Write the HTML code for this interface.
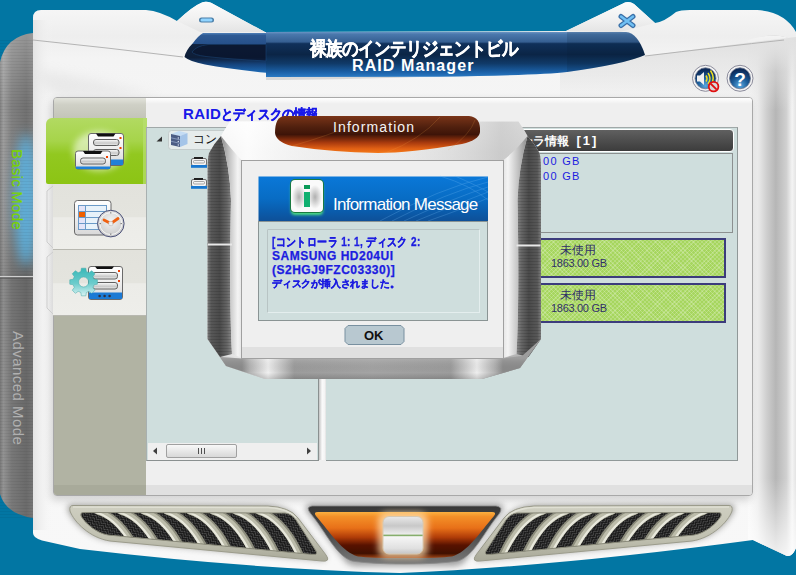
<!DOCTYPE html>
<html><head><meta charset="utf-8">
<style>
html,body{margin:0;padding:0;width:796px;height:575px;overflow:hidden;background:#0276a3;font-family:"Liberation Sans",sans-serif;}
.a{position:absolute;}
#chrome{position:absolute;left:0;top:0;}
</style></head><body>
<svg id="chrome" width="796" height="575" viewBox="0 0 796 575">
<defs>
  <linearGradient id="sideg" x1="0" x2="1" y1="0" y2="0">
    <stop offset="0" stop-color="#808080"/><stop offset="0.1" stop-color="#9c9c9c"/><stop offset="0.35" stop-color="#808080"/><stop offset="0.8" stop-color="#717171"/><stop offset="1" stop-color="#7c7c7c"/>
  </linearGradient>
  <linearGradient id="sidev" x1="0" x2="0" y1="0" y2="1">
    <stop offset="0" stop-color="#ffffff" stop-opacity="0.25"/><stop offset="0.15" stop-color="#ffffff" stop-opacity="0"/><stop offset="0.5" stop-color="#000" stop-opacity="0.1"/><stop offset="1" stop-color="#000" stop-opacity="0.05"/>
  </linearGradient>
  <radialGradient id="sideglow" cx="0.8" cy="0.5" r="0.5" gradientTransform="translate(0.1,0) scale(0.9,1)">
    <stop offset="0" stop-color="#60c0f0" stop-opacity="0.9"/><stop offset="0.6" stop-color="#4a90c8" stop-opacity="0.45"/><stop offset="1" stop-color="#4a80b0" stop-opacity="0"/>
  </radialGradient>
  <linearGradient id="bodyg" x1="0" x2="0" y1="0" y2="1">
    <stop offset="0" stop-color="#f8f8f8"/><stop offset="0.06" stop-color="#eeeeee"/><stop offset="0.1" stop-color="#f4f4f4"/><stop offset="0.3" stop-color="#f6f6f6"/><stop offset="1" stop-color="#f8f8f8"/>
  </linearGradient>
  <linearGradient id="leftg" x1="0" x2="1" y1="0" y2="0">
    <stop offset="0" stop-color="#e4e4e4"/><stop offset="1" stop-color="#f6f6f6" stop-opacity="0"/>
  </linearGradient>
  <linearGradient id="rightg" x1="0" x2="1" y1="0" y2="0">
    <stop offset="0" stop-color="#f0f0f0" stop-opacity="0"/><stop offset="0.2" stop-color="#ececec"/><stop offset="0.4" stop-color="#cdcdcd"/><stop offset="0.58" stop-color="#b6b6b6"/><stop offset="0.8" stop-color="#d0d0d0"/><stop offset="0.92" stop-color="#f4f4f4"/><stop offset="1" stop-color="#e4e4e4"/>
  </linearGradient>
  <linearGradient id="rightv" x1="0" x2="0" y1="0" y2="1">
    <stop offset="0" stop-color="#f4f4f4" stop-opacity="1"/><stop offset="0.02" stop-color="#f0f0f0" stop-opacity="0.9"/><stop offset="0.07" stop-color="#f0f0f0" stop-opacity="0"/><stop offset="0.85" stop-color="#fff" stop-opacity="0"/><stop offset="1" stop-color="#fff" stop-opacity="0.8"/>
  </linearGradient>
  <linearGradient id="bannerg" x1="0" x2="0" y1="0" y2="1">
    <stop offset="0" stop-color="#6a94c4"/><stop offset="0.05" stop-color="#4a78ac"/><stop offset="0.22" stop-color="#365f92"/><stop offset="0.26" stop-color="#10305a"/><stop offset="0.5" stop-color="#0b2546"/><stop offset="0.7" stop-color="#103a68"/><stop offset="0.88" stop-color="#1a5ea4"/><stop offset="1" stop-color="#2a7ac4"/>
  </linearGradient>
  <linearGradient id="bannerl" x1="0" x2="0" y1="0" y2="1">
    <stop offset="0" stop-color="#5080b8"/><stop offset="0.06" stop-color="#2e5a94"/><stop offset="0.27" stop-color="#26508a"/><stop offset="0.29" stop-color="#10223e"/><stop offset="0.62" stop-color="#0e1e38"/><stop offset="0.78" stop-color="#15427a"/><stop offset="1" stop-color="#1e6cb8"/>
  </linearGradient>
  <linearGradient id="bumpg" x1="0" x2="0" y1="0" y2="1">
    <stop offset="0" stop-color="#fcfcfc"/><stop offset="0.6" stop-color="#f0f0f0"/><stop offset="1" stop-color="#e4e4e4"/>
  </linearGradient>
  <pattern id="brushs" width="33" height="3" patternUnits="userSpaceOnUse"><rect y="1" width="33" height="1" fill="#000" opacity="0.05"/></pattern>
  <linearGradient id="crg" x1="0" x2="0" y1="40" y2="110" gradientUnits="userSpaceOnUse"><stop offset="0" stop-color="#dadada" stop-opacity="0.7"/><stop offset="0.5" stop-color="#e0e0e0" stop-opacity="0.5"/><stop offset="1" stop-color="#e8e8e8" stop-opacity="0"/></linearGradient>
  <filter id="bl6" x="-50%" y="-50%" width="200%" height="200%"><feGaussianBlur stdDeviation="6"/></filter>
</defs>
<!-- side bar -->
<path d="M0,62 Q6,36 33,33 L33,518 Q6,514 0,494 Z" fill="url(#sideg)"/>
<path d="M0,62 Q6,36 33,33 L33,518 Q6,514 0,494 Z" fill="url(#sidev)"/>
<ellipse cx="26" cy="200" rx="12" ry="66" fill="#5cbcf0" opacity="0.8" filter="url(#bl6)"/>
<rect x="0" y="40" width="33" height="480" fill="url(#brushs)"/>
<rect x="0" y="276" width="33" height="1.5" fill="#d0d0d0"/>
<rect x="0" y="277.5" width="33" height="1" fill="#4a4a4a"/>
<!-- body -->
<path d="M33,18 Q33,10 41,10 L146,10 Q160,11 177,21 Q193,6 202,2.5 Q206,0.8 211,2.8 L265,32 L566,31 L622,4 Q628,0 634,4 L655,23 Q664,22 676,12 Q680,10 690,10 L757,10 Q785,12 796,32 L796,548 Q792,557 787,556 L753,540 Q560,566 400,573 Q250,569 80,549 L42,540.5 Q33,538 33,533 Z" fill="url(#bodyg)"/>
<path d="M33,20 L53,20 L53,530 L33,530 Z" fill="url(#leftg)"/>
<!-- soft shading near top-left -->
<path d="M40,70 Q100,80 160,97 L60,97 Q45,90 40,80 Z" fill="#d4d4d4" opacity="0.35" filter="url(#bl6)"/>
<!-- right cylinder shading -->
<path d="M748,40 Q780,30 796,42 L796,548 Q792,557 787,556 L753,540 L748,540 Z" fill="url(#rightg)"/>
<path d="M748,40 Q780,30 796,42 L796,548 Q792,557 787,556 L753,540 L748,540 Z" fill="url(#rightv)"/>
<path d="M645,56 Q720,46 796,37 L796,110 L560,110 L560,70 Z" fill="url(#crg)"/>
<!-- creases -->
<path d="M33,40 Q110,48 183,57" stroke="#b4b4b4" stroke-width="1" fill="none"/>
<path d="M645,56 Q720,47 784,40" stroke="#b4b4b4" stroke-width="1" fill="none"/>
<!-- bumps -->
<path d="M177,21 Q193,6 202,2.5 Q206,0.8 211,2.8 L265,32 L200,32 Z" fill="url(#bumpg)"/>
<path d="M566,31 L622,4 Q628,0 634,4 L655,23 L620,32 Z" fill="url(#bumpg)"/>
<!-- minimize icon -->
<rect x="199" y="17.5" width="15" height="5" rx="2.5" fill="#4a7ea8"/>
<rect x="200.5" y="18.5" width="12" height="3" rx="1.5" fill="#90d4ff"/>
<!-- close icon -->
<path d="M621,16.5 L633,25.5 M633,16.5 L621,25.5" stroke="#3a70a8" stroke-width="5" stroke-linecap="round"/>
<path d="M621,16.5 L633,25.5 M633,16.5 L621,25.5" stroke="#70c0f4" stroke-width="2.4" stroke-linecap="round"/>
<!-- banner right (rect) -->
<path d="M266,74 L266,80 Q330,80 420,77 Z" fill="#d8d8d8"/>
<path d="M266,32 L626,32 Q638,33 645,55 Q625,64 567,72 Q540,75.3 440,76.8 L266,77 Z" fill="url(#bannerg)"/>
<path d="M567,32 L626,32 Q638,33 645,55 Q625,64 567,72 Z" fill="#08182e" opacity="0.15"/>
<!-- banner left (tip) -->
<path d="M266,33 L266,72.8 Q230,69 205,64.5 Q189,61 184.5,57 Q186,50 193,43 Q198,36 203,33 Z" fill="url(#bannerl)"/>
<path d="M192,52 Q196,46 208,44.5 L266,44.5 L266,61 Q228,59 206,56.5 Q194,55 192,52 Z" fill="#08122a" opacity="0.55" stroke="#1c4c84" stroke-width="0.8"/>
</svg>


<!-- bottom grilles & button -->
<svg class="a" style="left:0;top:0" width="796" height="575" viewBox="0 0 796 575">
<defs>
  <pattern id="mesh" width="6" height="6" patternUnits="userSpaceOnUse" patternTransform="rotate(40)">
    <rect width="6" height="6" fill="#1a1a1a"/>
    <path d="M0,3 L3,0 L6,3 M0,6 L3,3 L6,6" stroke="#505050" stroke-width="1" fill="none"/>
  </pattern>
  <clipPath id="gin"><path d="M83,512.5 L285,513 Q292,514 296,520 L316,551 Q318,555 313,554.5 L108,535 C96,533 85,523 81,516 Q80,512.5 83,512.5 Z"/></clipPath>
  <linearGradient id="rimg" x1="0" x2="0" y1="0" y2="1"><stop offset="0" stop-color="#cfcfc1"/><stop offset="0.6" stop-color="#c0c0b0"/><stop offset="1" stop-color="#a8a898"/></linearGradient>
  <filter id="blur3" x="-20%" y="-50%" width="140%" height="200%"><feGaussianBlur stdDeviation="3"/></filter>
  <linearGradient id="orb" x1="0" x2="0" y1="0" y2="1">
    <stop offset="0" stop-color="#fbb040"/><stop offset="0.1" stop-color="#f49028"/><stop offset="0.35" stop-color="#e87018"/><stop offset="0.55" stop-color="#b03c08"/><stop offset="0.72" stop-color="#581200"/><stop offset="0.9" stop-color="#401000"/><stop offset="1" stop-color="#a04414"/>
  </linearGradient>
  <linearGradient id="bez" x1="0" x2="0" y1="0" y2="1">
    <stop offset="0" stop-color="#383838"/><stop offset="0.5" stop-color="#4a4a4a"/><stop offset="1" stop-color="#7a7a7a"/>
  </linearGradient>
  <linearGradient id="silv" x1="0" x2="0" y1="0" y2="1">
    <stop offset="0" stop-color="#e8e8e8"/><stop offset="0.25" stop-color="#c8c8c8"/><stop offset="0.47" stop-color="#ececec"/><stop offset="0.5" stop-color="#70a050"/><stop offset="0.54" stop-color="#f6f6f6"/><stop offset="0.85" stop-color="#e0e0e0"/><stop offset="1" stop-color="#c4c4c4"/>
  </linearGradient>
  <g id="grille">
    <path d="M73,505.5 L268,506 Q290,507 298,518 L326,555 Q331,562 322,561 L110,541 C90,538 74,522 70,511 Q69,505.5 73,505.5 Z" fill="#60605a" filter="url(#blur3)" opacity="0.6" transform="translate(-2,-1)"/>
    <path d="M73,505.5 L268,506 Q290,507 298,518 L326,555 Q331,562 322,561 L110,541 C90,538 74,522 70,511 Q69,505.5 73,505.5 Z" fill="url(#rimg)" stroke="#9c9c8c" stroke-width="1"/>
    <path d="M73,507 L268,507.5 Q288,508.5 296,518" stroke="#e0e0d4" stroke-width="1.5" fill="none"/>
    <g clip-path="url(#gin)">
      <rect x="60" y="500" width="270" height="70" fill="url(#mesh)"/>
      <g stroke="#8c8c7c" stroke-width="7" fill="none"><path d="M97.5,511 Q123.5,518 141.5,560"/><path d="M120.5,511 Q146.5,518 164.5,560"/><path d="M143.5,511 Q169.5,518 187.5,560"/><path d="M166.5,511 Q192.5,518 210.5,560"/><path d="M189.5,511 Q215.5,518 233.5,560"/><path d="M212.5,511 Q238.5,518 256.5,560"/><path d="M235.5,511 Q261.5,518 279.5,560"/><path d="M258.5,511 Q284.5,518 302.5,560"/></g><g stroke="#bcbcaa" stroke-width="5.5" fill="none"><path d="M96,511 Q122,518 140,560"/><path d="M119,511 Q145,518 163,560"/><path d="M142,511 Q168,518 186,560"/><path d="M165,511 Q191,518 209,560"/><path d="M188,511 Q214,518 232,560"/><path d="M211,511 Q237,518 255,560"/><path d="M234,511 Q260,518 278,560"/><path d="M257,511 Q283,518 301,560"/></g>
      <g stroke="#e8e8dc" stroke-width="2.2" fill="none"><path d="M95,512 Q121,519 139,561"/><path d="M118,512 Q144,519 162,561"/><path d="M141,512 Q167,519 185,561"/><path d="M164,512 Q190,519 208,561"/><path d="M187,512 Q213,519 231,561"/><path d="M210,512 Q236,519 254,561"/><path d="M233,512 Q259,519 277,561"/><path d="M256,512 Q282,519 300,561"/></g>
    </g>
    <path d="M83,512.5 L285,513 Q292,514 296,520 L316,551 Q318,555 313,554.5 L108,535 C96,533 85,523 81,516 Q80,512.5 83,512.5 Z" fill="none" stroke="#8a8a7a" stroke-width="1"/>
  </g>
</defs>
<use href="#grille"/>
<use href="#grille" transform="translate(802,0) scale(-1,1)"/>
<!-- orange button -->
<path d="M310,504 L498,504 Q508,506 500,514 L464,562 Q460,566 452,566 L358,566 Q350,566 346,562 L309,514 Q302,506 310,504 Z" fill="#606060" filter="url(#blur3)" opacity="0.6"/>
<path d="M312,506 L496,506 Q504,507 499,514 C484,532 474,556 458,561 Q440,564 405,564 Q370,564 352,561 C336,556 326,532 311,514 Q305,507 312,506 Z" fill="url(#bez)" stroke="#8a8a8a" stroke-width="0.8"/>
<path d="M318,512 L492,512 Q497,512 494,516 C480,532 468,552 452,556.5 Q440,558 405,558 Q370,558 358,556.5 C342,552 330,532 316,516 Q313,512 318,512 Z" fill="url(#orb)"/>
<rect x="378" y="512" width="50" height="46" rx="9" fill="#ffe0b0" opacity="0.75" filter="url(#blur3)"/>
<rect x="383" y="516.5" width="40" height="37.5" rx="6" fill="url(#silv)" stroke="#d8c8b0" stroke-width="1"/>
</svg>

<!-- title text -->
<div class="a" style="left:310px;top:38px;height:22px;color:#fff;font-weight:bold;font-size:19px;line-height:22px;white-space:nowrap;letter-spacing:-0.5px;transform:scaleX(0.867);transform-origin:0 0;-webkit-text-stroke:0.5px #fff;">裸族のインテリジェントビル</div>
<div class="a" style="left:352px;top:57px;color:#fff;font-weight:bold;font-size:16px;line-height:18px;letter-spacing:1.1px;white-space:nowrap;">RAID Manager</div>


<!-- inner panel -->
<div class="a" style="left:53px;top:97px;width:700px;height:399px;background:#efefef;border:1px solid #a8a8a8;border-radius:4px;box-sizing:border-box;overflow:hidden;box-shadow:-2px 4px 8px rgba(0,0,0,0.16);">
  <div class="a" style="left:0;top:387px;width:700px;height:12px;background:#e0e0e0;"></div>
  <div class="a" style="left:0;top:0;width:700px;height:6px;background:linear-gradient(#ffffff,#efefef);"></div>
  <!-- left column -->
  <div class="a" style="left:0;top:0;width:92px;height:399px;background:#b1b3a3;"></div>
  <div class="a" style="left:0;top:0;width:92px;height:22px;background:linear-gradient(#e2e3db,#cfd0c6 30%,#c2c3b7);"></div>
  <div class="a" style="left:0;top:387px;width:92px;height:12px;background:#a8aa9a;"></div>
</div>
<!-- tabs (outside clip for flap) -->
<div class="a" style="left:53px;top:184px;width:93px;height:66px;background:linear-gradient(#e2e2dc 0%,#e4e4de 50%,#ececE8 52%,#eeeeea 100%);border-bottom:1px solid #b8b8b0;box-sizing:border-box;"></div>
<div class="a" style="left:53px;top:250px;width:93px;height:66px;background:linear-gradient(#e2e2dc 0%,#e4e4de 50%,#ececE8 52%,#eeeeea 100%);border-bottom:1px solid #b8b8b0;box-sizing:border-box;"></div>
<div class="a" style="left:46px;top:118px;width:101px;height:66px;border-radius:6px 0 0 2px;background:linear-gradient(#b2da62 0%,#a6d44a 35%,#92c820 55%,#8cc414 100%);"></div>
<div class="a" style="left:143px;top:118px;width:4px;height:66px;background:#b8e070;opacity:0.7;"></div>

<svg class="a" style="left:44px;top:182px" width="12" height="136" viewBox="44 182 12 136">
<path d="M53,186 L47,191 L47,242 L53,248 M53,252 L47,257 L47,308 L53,314" stroke="#cdcdcd" stroke-width="1" fill="none"/>
</svg>
<!-- tab icons -->
<svg class="a" style="left:46px;top:118px" width="101" height="198" viewBox="46 118 101 198">
<defs>
  <linearGradient id="drvg" x1="0" x2="0" y1="0" y2="1"><stop offset="0" stop-color="#ffffff"/><stop offset="0.5" stop-color="#eeeeee"/><stop offset="1" stop-color="#d8d8d8"/></linearGradient>
  <linearGradient id="slotg" x1="0" x2="0" y1="0" y2="1"><stop offset="0" stop-color="#ffffff"/><stop offset="0.6" stop-color="#c8c8c8"/><stop offset="1" stop-color="#f0f0f0"/></linearGradient>
  <linearGradient id="gearg" x1="0" x2="0" y1="0" y2="1"><stop offset="0" stop-color="#38b8b8"/><stop offset="0.55" stop-color="#6ccccc"/><stop offset="1" stop-color="#d8f2f2"/></linearGradient>
  <radialGradient id="clockg" cx="0.5" cy="0.4" r="0.6"><stop offset="0" stop-color="#f4f4f4"/><stop offset="1" stop-color="#c8c8c8"/></radialGradient>
  <filter id="glw" x="-30%" y="-30%" width="160%" height="160%"><feGaussianBlur stdDeviation="3"/></filter>
</defs>
<!-- icon 1 glow -->
<ellipse cx="99" cy="151" rx="26" ry="20" fill="#ffffff" opacity="0.55" filter="url(#glw)"/>
<!-- back drive -->
<rect x="88.5" y="133.5" width="35" height="32" rx="2.5" fill="url(#drvg)" stroke="#6a6a6a" stroke-width="1"/>
<path d="M96,133.5 L115.5,133.5 L113.5,136.5 L98,136.5 Z" fill="#101010"/>
<rect x="93.5" y="139.5" width="25.5" height="6" rx="2.5" fill="url(#slotg)" stroke="#606060" stroke-width="1"/>
<rect x="93.5" y="149.5" width="25.5" height="6" rx="2.5" fill="url(#slotg)" stroke="#606060" stroke-width="1"/>
<rect x="119.5" y="137" width="2" height="2" fill="#f04000"/><rect x="119.5" y="147" width="2" height="2" fill="#f04000"/>
<rect x="89" y="159.5" width="34" height="5.5" fill="#2080d8"/>
<!-- front drive -->
<rect x="75.5" y="151" width="35" height="18" rx="2.5" fill="url(#drvg)" stroke="#6a6a6a" stroke-width="1"/>
<path d="M83,151 L102.5,151 L100.5,154 L85,154 Z" fill="#101010"/>
<rect x="80.5" y="158" width="25" height="6" rx="2.5" fill="url(#slotg)" stroke="#606060" stroke-width="1"/>
<rect x="106" y="156" width="2" height="2" fill="#f04000"/>
<rect x="76" y="166.5" width="34" height="2.5" fill="#2080d8"/>
<!-- icon 2: table + clock -->
<rect x="74.5" y="200.5" width="36.5" height="34.5" rx="3" fill="url(#drvg)" stroke="#6a6a6a" stroke-width="1"/>
<rect x="78.5" y="205.5" width="28" height="24" fill="#e8f2fa" stroke="#6a9ac8" stroke-width="1"/>
<path d="M78.5,211.5 L106.5,211.5 M78.5,217.5 L106.5,217.5 M78.5,223.5 L106.5,223.5 M85.5,205.5 L85.5,229.5" stroke="#6a9ac8" stroke-width="1"/>
<rect x="79" y="212" width="6" height="5" fill="#f06000"/>
<rect x="79" y="206" width="6" height="5" fill="#e4e4f8"/><rect x="79" y="218" width="6" height="5" fill="#e4e4f8"/><rect x="79" y="224" width="6" height="5" fill="#e4e4f8"/>
<circle cx="110.8" cy="223.6" r="13.3" fill="url(#clockg)" stroke="#4a5078" stroke-width="1"/>
<circle cx="110.8" cy="223.6" r="11" fill="none" stroke="#ffffff" stroke-width="1" opacity="0.8"/>
<path d="M110.8,223.6 L104,220 M110.8,223.6 L118,218.5" stroke="#f06010" stroke-width="2.8" stroke-linecap="round"/>
<rect x="108.8" y="221.6" width="4" height="4" rx="1" fill="#f0f0f0" stroke="#b0b0b0" stroke-width="0.5"/>
<path d="M110.8,212 L110.8,213.5 M110.8,233.5 L110.8,235 M99.5,223.6 L101,223.6 M120.5,223.6 L122,223.6" stroke="#606060" stroke-width="0.8"/>
<!-- icon 3: gear + drive -->
<rect x="88.5" y="266.5" width="34" height="33" rx="2.5" fill="url(#drvg)" stroke="#6a6a6a" stroke-width="1"/>
<path d="M95,266.5 L114,266.5 L112,269 L97,269 Z" fill="#101010"/>
<rect x="92.5" y="272.5" width="25" height="6.5" rx="2.5" fill="url(#slotg)" stroke="#606060" stroke-width="1"/>
<rect x="92.5" y="282.5" width="25" height="6.5" rx="2.5" fill="url(#slotg)" stroke="#606060" stroke-width="1"/>
<rect x="118" y="270" width="2" height="2" fill="#f04000"/><rect x="118" y="280" width="2" height="2" fill="#f04000"/>
<rect x="89" y="292.5" width="33" height="6.5" fill="#1c7ad4"/>
<circle cx="99.6" cy="296" r="1.3" fill="#303040"/><circle cx="104.6" cy="296" r="1.3" fill="#303040"/><circle cx="109.6" cy="296" r="1.3" fill="#303040"/>
<path d="M80.82,271.56 L81.37,268.18 L85.83,268.18 L86.38,271.56 L89.02,272.66 L91.80,270.65 L94.95,273.80 L92.94,276.58 L94.04,279.22 L97.42,279.77 L97.42,284.23 L94.04,284.78 L92.94,287.42 L94.95,290.20 L91.80,293.35 L89.02,291.34 L86.38,292.44 L85.83,295.82 L81.37,295.82 L80.82,292.44 L78.18,291.34 L75.40,293.35 L72.25,290.20 L74.26,287.42 L73.16,284.78 L69.78,284.23 L69.78,279.77 L73.16,279.22 L74.26,276.58 L72.25,273.80 L75.40,270.65 L78.18,272.66 Z M88.6,282 A5,5 0 1,0 78.6,282 A5,5 0 1,0 88.6,282 Z" fill="url(#gearg)" fill-rule="evenodd" stroke="#40a8a8" stroke-width="0.5"/>
</svg>

<!-- content title -->
<div class="a" style="left:183px;top:104.5px;color:#1818e8;font-weight:bold;font-size:14px;line-height:17px;white-space:nowrap;"><span style="letter-spacing:0.4px;font-size:15px">RAID</span><span style="font-size:14px;display:inline-block;transform:scaleX(0.87);transform-origin:0 0;position:relative;top:0.5px;-webkit-text-stroke:0.4px #1818e8;">とディスクの情報</span></div>
<!-- tree panel -->
<div class="a" style="left:146px;top:127px;width:173px;height:334px;background:#cfdedd;border-top:1px solid #a0a8a8;border-left:1px solid #a8b0b0;border-right:1.5px solid #8a9090;border-bottom:1px solid #8a9090;box-sizing:border-box;"></div>
<div class="a" style="left:148px;top:443px;width:169px;height:17px;background:#efefef;"></div>
<div class="a" style="left:166px;top:444px;width:71px;height:14px;border:1px solid #a0a0a0;border-radius:2px;background:linear-gradient(#f8f8f8,#d8d8d8);box-sizing:border-box;"></div>
<div class="a" style="left:319px;top:127px;width:7px;height:333px;background:linear-gradient(90deg,#c4c4c4,#fafafa 45%,#f4f4f4 80%,#e0e0e0);"></div>
<!-- right panel -->
<div class="a" style="left:326px;top:127px;width:412px;height:334px;background:#cfdedd;border-top:1px solid #a0a8a8;border-right:1px solid #909898;border-bottom:1px solid #909898;box-sizing:border-box;"></div>
<div class="a" style="left:326px;top:129px;width:408px;height:23px;background:linear-gradient(#606060,#4a4a4a 60%,#3c3c3c);border:1px solid #fff;border-radius:0 4px 4px 0;box-sizing:border-box;"></div>
<div class="a" style="left:521px;top:133px;color:#fff;font-weight:bold;font-size:11.5px;line-height:16px;white-space:nowrap;letter-spacing:0;">ーラ情報<span style="position:absolute;left:55.5px;top:0;font-size:13px;letter-spacing:2px;">[1]</span></div>
<div class="a" style="left:326px;top:153px;width:407px;height:80px;background:#cfdedd;border:1px solid #8c9090;box-sizing:border-box;"></div>
<div class="a" style="left:543px;top:154px;color:#2020e0;font-size:11px;line-height:15px;white-space:nowrap;letter-spacing:1.3px;">00 GB<br>00 GB</div>
<div class="a" style="left:326px;top:238px;width:400px;height:40px;background-color:#a6d65e;background-image:repeating-linear-gradient(45deg,rgba(255,255,255,0.2) 0 1px,transparent 1px 3px),repeating-linear-gradient(-45deg,rgba(255,255,255,0.2) 0 1px,transparent 1px 3px);border:2px solid #3c3c7c;box-sizing:border-box;"></div>
<div class="a" style="left:326px;top:283px;width:400px;height:40px;background-color:#a6d65e;background-image:repeating-linear-gradient(45deg,rgba(255,255,255,0.2) 0 1px,transparent 1px 3px),repeating-linear-gradient(-45deg,rgba(255,255,255,0.2) 0 1px,transparent 1px 3px);border:2px solid #3c3c7c;box-sizing:border-box;"></div>
<div class="a" style="left:551px;top:244px;color:#303068;font-size:12px;line-height:13px;white-space:nowrap;"><span style="margin-left:9px">未使用</span><br><span style="font-size:11px;letter-spacing:-0.3px">1863.00 GB</span></div>
<div class="a" style="left:551px;top:289px;color:#303068;font-size:12px;line-height:13px;white-space:nowrap;"><span style="margin-left:9px">未使用</span><br><span style="font-size:11px;letter-spacing:-0.3px">1863.00 GB</span></div>


<!-- side bar text -->
<div class="a" style="left:9px;top:149px;width:17px;height:82px;writing-mode:vertical-rl;color:#7ad400;font-size:15px;line-height:17px;letter-spacing:0.25px;-webkit-text-stroke:0.2px #7ad400;white-space:nowrap;">Basic Mode</div>
<div class="a" style="left:10px;top:331px;width:17px;height:115px;writing-mode:vertical-rl;color:#b0b0b0;font-size:15px;line-height:17px;letter-spacing:0.45px;white-space:nowrap;">Advanced Mode</div>
<!-- sound / help icons -->
<svg class="a" style="left:690px;top:63px" width="68" height="32" viewBox="690 63 68 32">
<defs>
  <radialGradient id="icg" cx="0.5" cy="0.85" r="0.75">
    <stop offset="0" stop-color="#58a8e0"/><stop offset="0.5" stop-color="#1c5c98"/><stop offset="1" stop-color="#0c2a58"/>
  </radialGradient>
</defs>
<circle cx="705.5" cy="78.3" r="13" fill="#f4f4f4" stroke="#8a8a9a" stroke-width="1"/>
<circle cx="705.5" cy="78.3" r="10.5" fill="url(#icg)" stroke="#707890" stroke-width="0.8"/>
<path d="M697,75.5 L700,75.5 L704,72 L704,85 L700,81.5 L697,81.5 Z" fill="#f0f0f0"/>
<path d="M706,75.5 Q708,78.5 706,81.5 M708,73 Q712,78.5 708,84 M710.5,70.5 Q716,78.5 710.5,86" stroke="#f0e020" stroke-width="1.5" fill="none"/>
<circle cx="713.6" cy="86.6" r="4.8" fill="#d8d8d8" stroke="#e01010" stroke-width="1.8"/>
<path d="M710.5,83.5 L716.7,89.7" stroke="#e01010" stroke-width="1.8"/>
<circle cx="740" cy="78.3" r="13" fill="#f4f4f4" stroke="#8a8a9a" stroke-width="1"/>
<circle cx="740" cy="78.3" r="10.5" fill="url(#icg)" stroke="#707890" stroke-width="0.8"/>
<text x="740" y="85.5" font-family="Liberation Sans" font-weight="bold" font-size="19" fill="#fff" text-anchor="middle">?</text>
</svg>
<!-- tree items -->
<svg class="a" style="left:148px;top:128px" width="170" height="70" viewBox="148 128 170 70">
<path d="M156.5,141.5 L162,136.5 L162,141.5 Z" fill="#303030"/>
<rect x="168.5" y="130.5" width="60" height="19" rx="3" fill="#e6ecec" stroke="#c4cccc" stroke-width="1"/>
<path d="M171,134 L179,131 L187.5,133 L180,136 Z" fill="#c4dcf4"/>
<path d="M171,134 L180,136 L180,147 L171,145 Z" fill="#4c5c84"/>
<path d="M180,136 L187.5,133 L187.5,144 L180,147 Z" fill="#a4c4e8"/>
<path d="M171,137.8 L180,139.8 M171,141.3 L180,143.3" stroke="#8a9cc0" stroke-width="0.9"/>
<circle cx="178.3" cy="138" r="0.7" fill="#e0e8f8"/><circle cx="178.3" cy="141.5" r="0.7" fill="#e0e8f8"/><circle cx="178.3" cy="145" r="0.7" fill="#e0e8f8"/>
<text x="193" y="143" font-family="Liberation Sans" font-size="12" fill="#101010">コン</text>
<g id="drv">
<rect x="191.5" y="158.5" width="15" height="7" rx="1.5" fill="#f4f4f4" stroke="#707070" stroke-width="1"/>
<rect x="194" y="157" width="9" height="2" fill="#202020"/>
<rect x="193.5" y="160.5" width="11" height="2.5" rx="1" fill="none" stroke="#909090" stroke-width="0.8"/>
<rect x="191" y="165" width="16" height="2.8" fill="#1878d0"/>
</g>
<use href="#drv" y="21"/>
</svg>
<!-- scrollbar arrows -->
<svg class="a" style="left:148px;top:443px" width="170" height="16" viewBox="148 443 170 16">
<path d="M153,451 L157,447.5 L157,454.5 Z" fill="#404040"/>
<path d="M311,451 L307,447.5 L307,454.5 Z" fill="#404040"/>
<path d="M198.5,448 L198.5,454 M201.5,448 L201.5,454 M204.5,448 L204.5,454" stroke="#505050" stroke-width="1"/>
</svg>

<!-- dialog -->
<svg class="a" style="left:0;top:0" width="796" height="575" viewBox="0 0 796 575">
<defs>
  <linearGradient id="dlgface" x1="0" x2="0" y1="121" y2="379" gradientUnits="userSpaceOnUse">
    <stop offset="0" stop-color="#fafafa"/><stop offset="0.12" stop-color="#ececec"/><stop offset="0.5" stop-color="#e2e2e2"/><stop offset="0.9" stop-color="#c8c8c8"/><stop offset="0.93" stop-color="#a8a8a8"/><stop offset="1" stop-color="#8c8c8c"/>
  </linearGradient>
  <linearGradient id="dlgtopg" x1="0" x2="1" y1="0" y2="0">
    <stop offset="0" stop-color="#ffffff" stop-opacity="0.2"/><stop offset="0.12" stop-color="#ffffff" stop-opacity="0.8"/><stop offset="0.5" stop-color="#e8e8e8" stop-opacity="0.1"/><stop offset="0.88" stop-color="#b0b0b0" stop-opacity="0.55"/><stop offset="1" stop-color="#a0a0a0" stop-opacity="0.3"/>
  </linearGradient>
  <linearGradient id="tube" x1="0" x2="1" y1="0" y2="0">
    <stop offset="0" stop-color="#7c7c7c"/><stop offset="0.15" stop-color="#585858"/><stop offset="0.5" stop-color="#4a4a4a"/><stop offset="0.8" stop-color="#666666"/><stop offset="1" stop-color="#8a8a8a"/>
  </linearGradient>
  <linearGradient id="tubehl" x1="0" x2="1" y1="0" y2="0">
    <stop offset="0" stop-color="#8c8c8c"/><stop offset="0.4" stop-color="#c4c4c4"/><stop offset="0.8" stop-color="#f4f4f4"/><stop offset="1" stop-color="#e4e4e4"/>
  </linearGradient>
  <pattern id="brush" width="4" height="3" patternUnits="userSpaceOnUse">
    <rect width="4" height="1" fill="#000" opacity="0.12"/>
  </pattern>
  <linearGradient id="dlgbot" x1="242" x2="503" y1="0" y2="0" gradientUnits="userSpaceOnUse">
    <stop offset="0" stop-color="#8c8c8c"/><stop offset="0.03" stop-color="#b4b4b4"/><stop offset="0.1" stop-color="#f0f0f0"/><stop offset="0.2" stop-color="#9c9c9c"/><stop offset="0.5" stop-color="#a4a4a4"/><stop offset="0.8" stop-color="#9c9c9c"/><stop offset="0.9" stop-color="#eeeeee"/><stop offset="0.97" stop-color="#b0b0b0"/><stop offset="1" stop-color="#8c8c8c"/>
  </linearGradient>
  <linearGradient id="dlgbotv" x1="0" x2="0" y1="358" y2="379" gradientUnits="userSpaceOnUse">
    <stop offset="0" stop-color="#fff" stop-opacity="0.15"/><stop offset="0.7" stop-color="#000" stop-opacity="0"/><stop offset="1" stop-color="#000" stop-opacity="0.15"/>
  </linearGradient>
  <linearGradient id="orng" x1="0" x2="0" y1="116" y2="153" gradientUnits="userSpaceOnUse">
    <stop offset="0" stop-color="#7a3418"/><stop offset="0.3" stop-color="#50200e"/><stop offset="0.5" stop-color="#3e1408"/><stop offset="0.72" stop-color="#a83a0e"/><stop offset="0.88" stop-color="#e06014"/><stop offset="1" stop-color="#f47818"/>
  </linearGradient>
  <linearGradient id="bluehd" x1="0" x2="0" y1="0" y2="1">
    <stop offset="0" stop-color="#0a78d8"/><stop offset="0.5" stop-color="#086cc4"/><stop offset="0.78" stop-color="#0a5cac"/><stop offset="1" stop-color="#0e5098"/>
  </linearGradient>
</defs>
<path d="M230,121.4 L518.5,121.4 L524.5,130.8 L527.5,136 Q535,144 539.5,153 Q541,158 541,170 L541,339 L520,368 L482,379 L265,379 L226,366 L207.5,339 L207.5,170 Q207.5,158 209,153 Q213.5,144 221,136 L224,130.8 L230,121.4 Z" fill="url(#dlgface)"/>
<path d="M230,121.4 L518.5,121.4 L524.5,130.8 L527.5,136 Q535,144 539.5,153 Q541,158 541,170 L541,339 L520,368 L482,379 L265,379 L226,366 L207.5,339 L207.5,170 Q207.5,158 209,153 Q213.5,144 221,136 L224,130.8 L230,121.4 Z" fill="url(#dlgtopg)"/>
<!-- left tube -->
<path d="M221,136 Q213.5,144 209,153 Q207.5,158 207.5,170 L207.5,339 L220,357 L232,354 Q229,300 231,200 Q230,168 221,136 Z" fill="url(#tube)"/>
<path d="M221,136 Q213.5,144 209,153 Q207.5,158 207.5,170 L207.5,339 L220,357 L232,354 Q229,300 231,200 Q230,168 221,136 Z" fill="url(#brush)"/>
<path d="M221,136 Q230,168 231,200 Q229,300 232,354 L242,358 L241.5,160 Q232,150 221,136 Z" fill="url(#tubehl)"/>
<rect x="208" y="243.5" width="24" height="2" fill="#e8e8e8"/>
<!-- right tube (mirror) -->
<g transform="translate(748.5,0) scale(-1,1)">
<path d="M221,136 Q213.5,144 209,153 Q207.5,158 207.5,170 L207.5,339 L220,357 L232,354 Q229,300 231,200 Q230,168 221,136 Z" fill="url(#tube)"/>
<path d="M221,136 Q213.5,144 209,153 Q207.5,158 207.5,170 L207.5,339 L220,357 L232,354 Q229,300 231,200 Q230,168 221,136 Z" fill="url(#brush)"/>
<path d="M221,136 Q230,168 231,200 Q229,300 232,354 L245.5,358 L245,160 Q232,150 221,136 Z" fill="url(#tubehl)"/>
<rect x="208" y="244.5" width="24" height="2" fill="#e8e8e8"/>
</g>
<!-- bottom face -->
<path d="M207.5,339 L226,366 L265,379 L482,379 L520,368 L541,339 L522,356 L503,358.5 L242,358.5 L220,357 Z" fill="url(#dlgbot)"/>
<path d="M207.5,339 L226,366 L265,379 L482,379 L520,368 L541,339 L522,356 L503,358.5 L242,358.5 L220,357 Z" fill="url(#dlgbotv)"/>
<!-- orange tab -->
<path d="M284,116 L469,116 Q481,117 480,132 Q479,140 462,144 Q410,153 378,153 Q330,152 292,146 Q276,142 275,133 Q275,117 284,116 Z" fill="url(#orng)"/>
<g stroke="#f8a848" stroke-width="0.8" fill="none" opacity="0.22">
<path d="M385,153 Q420,140 440,117"/><path d="M292,146 Q330,135 350,126"/><path d="M448,150 Q470,135 475,120"/>
</g>
<!-- inner frame -->
<rect x="241.5" y="160.5" width="262" height="198" fill="#efefef" stroke="#a0a0a0" stroke-width="1"/>
<rect x="242" y="347" width="261" height="11" fill="#e0e0e0"/>
<!-- blue header -->
<rect x="258.5" y="176.5" width="229.5" height="44.5" fill="url(#bluehd)"/>
<g stroke="#7ac0f8" stroke-width="0.7" opacity="0.35" fill="none">
  <path d="M380,221 Q440,188 488,177"/><path d="M392,221 Q448,192 488,182"/><path d="M404,221 Q456,197 488,187"/><path d="M416,221 Q462,202 488,192"/><path d="M428,221 Q468,207 488,198"/><path d="M440,176 Q470,185 488,200"/><path d="M455,176 Q478,186 488,192"/>
</g>
<!-- message box -->
<rect x="258.5" y="221.5" width="229" height="99" fill="#cfdedd" stroke="#8a9494" stroke-width="1"/>
<rect x="267.5" y="229.5" width="212" height="83" fill="none" stroke="#e4eeee" stroke-width="1"/>
<path d="M267.5,312.5 L267.5,229.5 L479.5,229.5" fill="none" stroke="#b8c4c4" stroke-width="1"/>
<!-- OK button -->
<path d="M348,325.5 L401,325.5 L404,328.5 L404,341.5 L401,344.5 L348,344.5 L345,341.5 L345,328.5 Z" fill="#b8c8d0" stroke="#7890a0" stroke-width="1"/>
</svg>
<div class="a" style="left:333px;top:119px;color:#f4f4f4;font-size:14px;line-height:17px;white-space:nowrap;letter-spacing:1.1px;">Information</div>
<div class="a" style="left:333px;top:195px;color:#fff;font-size:17px;line-height:20px;white-space:nowrap;letter-spacing:-0.75px;">Information Message</div>
<div class="a" style="left:291px;top:180px;width:32px;height:32px;border-radius:4px;background:radial-gradient(ellipse 7px 12px at 8px 17px,#b0b0b0,rgba(255,255,255,0)),radial-gradient(ellipse 7px 12px at 24px 17px,#b0b0b0,rgba(255,255,255,0)),#fafafa;box-shadow:0 0 0 1px #1a7a40, 0 3px 3px 0 #50e080;"></div>
<div class="a" style="left:304px;top:185px;width:6px;height:4px;background:#0a9a58;"></div>
<div class="a" style="left:304px;top:191.5px;width:6px;height:15.5px;background:#10b070;"></div>
<div class="a" style="left:272px;top:234.5px;color:#1c1ce0;font-weight:bold;font-size:12px;line-height:14.2px;white-space:nowrap;letter-spacing:0.5px;-webkit-text-stroke:0.25px #1c1ce0;"><span style="display:inline-block;transform:scaleX(0.83);transform-origin:0 0;-webkit-text-stroke:0.35px #1c1ce0;">[コントローラ 1: 1, ディスク 2:</span><br>SAMSUNG HD204UI<br>(S2HGJ9FZC03330)]<br><span style="display:inline-block;font-size:10px;letter-spacing:0;position:relative;top:-1.5px;transform:scaleX(0.98);transform-origin:0 0;-webkit-text-stroke:0.35px #1c1ce0;">ディスクが挿入されました。</span></div>
<div class="a" style="left:364px;top:328px;color:#101010;font-weight:bold;font-size:13px;line-height:15px;white-space:nowrap;">OK</div>



</body></html>
